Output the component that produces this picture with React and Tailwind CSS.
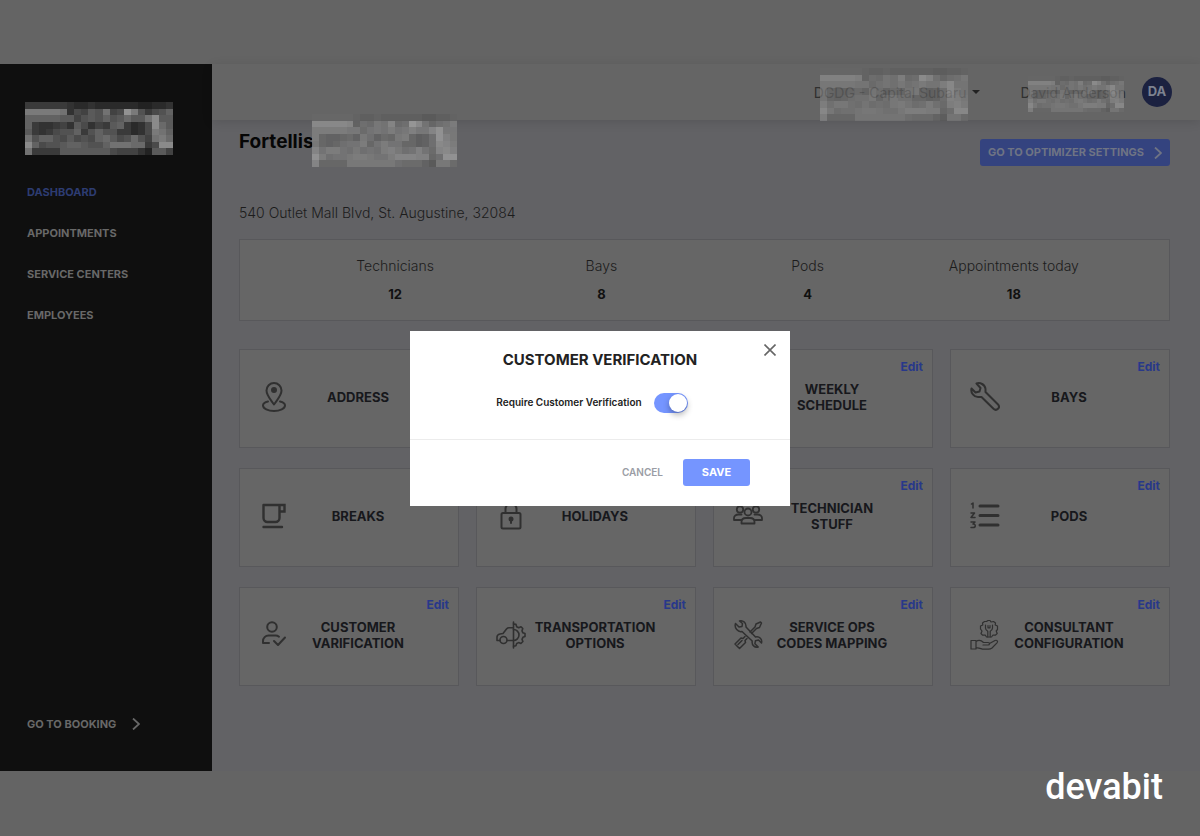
import { useState } from 'react';

const NAV_ITEMS = ['Dashboard', 'Appointments', 'Service Centers', 'Employees'];

const STATS = [
  { label: 'Technicians', value: 12 },
  { label: 'Bays', value: 8 },
  { label: 'Pods', value: 4 },
  { label: 'Appointments today', value: 18 },
];

// One hex digit per block: 0 is the darkest, f the lightest
const MOSAIC_ROWS = [
  '444444322322222211223',
  'cccccb36587b56fc74679',
  '99999885787978a88be88',
  '943345386354894236ea8',
  '843467794797744236cb9',
  'b7997686769a867a75bca',
  'e96778998779bbbaa46ee',
  'b44448888888655531885',
];

function Mosaic({ className, dark }) {
  return (
    <svg viewBox="0 0 21 8" preserveAspectRatio="none" shapeRendering="crispEdges" aria-hidden="true" className={className}>
      {MOSAIC_ROWS.map((row, y) =>
        row.split('').map((digit, x) => {
          const level = parseInt(digit, 16);
          const grey = dark ? 26 + level * 8 : 84 + level * 5;
          return <rect key={`${x}-${y}`} x={x} y={y} width="1" height="1" fill={`rgb(${grey},${grey},${grey})`} />;
        })
      )}
    </svg>
  );
}

function Icon({ children, strokeWidth = 2 }) {
  return (
    <svg
      viewBox="0 0 30 30"
      className="h-[30px] w-[30px] shrink-0 text-[#303030]"
      fill="none"
      stroke="currentColor"
      strokeWidth={strokeWidth}
      strokeLinecap="round"
      strokeLinejoin="round"
      aria-hidden="true"
    >
      {children}
    </svg>
  );
}

const AddressIcon = () => (
  <Icon>
    <path d="M15 22.500C12 18 7.500 13.500 7.500 8.500a7.500 7.500 0 0 1 15 0C22.500 13.500 18 18 15 22.500Z" />
    <circle cx="15" cy="8" r="2" fill="currentColor" />
    <path d="M9 19.500c-3 .7-5 2-5 4 0 3 5 5.500 11 5.500s11-2.500 11-5.500c0-2-2-3.300-5-4" />
  </Icon>
);

const CoffeeIcon = () => (
  <Icon strokeWidth={2.4}>
    <path d="M4.500 4h21v6.500h-5M20.500 4v13a4 4 0 0 1-4 4h-8a4 4 0 0 1-4-4V4" strokeLinejoin="miter" />
    <path d="M4.500 26h18.500" />
  </Icon>
);

const UserCheckIcon = () => (
  <Icon>
    <circle cx="13" cy="7" r="4.800" />
    <path d="M10 23H4v-2c0-3 2.500-5.500 5.500-5.500h7c1.500 0 2.500.4 3.500 1.200M15 21l4 4 7-7.500" />
  </Icon>
);

const LockIcon = () => (
  <Icon>
    <rect x="5.500" y="12" width="19" height="15.500" rx="1.500" />
    <path d="M9.500 12V8a5.500 5.500 0 0 1 11 0v4" />
    <circle cx="15" cy="18" r="1.500" fill="currentColor" />
    <path d="M15 18v4" />
  </Icon>
);

const CarGearIcon = () => (
  <Icon strokeWidth={1.6}>
    <path d="M17.500 2v26M4 20.500H1V17c0-1.500 1-2.500 3-3l3-.5 3.500-4.500c.7-.8 1.500-1.200 2.500-1.200h4.500M11.500 20.500h6" />
    <circle cx="7.500" cy="20" r="3.500" />
    <path d="M17.500 9.500a5.500 5.500 0 0 1 0 11M17.500 4l2.500.4.7 2.300 2 1 2.300-1 1.800 1.800-.8 2.300.9 2 2.100.7v3l-2.100.8-.9 2 .9 2.200-2 2-2.300-.9-1.900.9-.8 2.300-2.400.4" />
  </Icon>
);

const TeamIcon = () => (
  <Icon strokeWidth={1.8}>
    <circle cx="7" cy="8.500" r="3.200" />
    <circle cx="23" cy="8.500" r="3.200" />
    <circle cx="15" cy="11" r="3.500" />
    <path d="M7.500 19H1v-2c0-2 2-3.500 4.500-3.500h3M22.500 19H29v-2c0-2-2-3.500-4.500-3.500h-3M8.500 22.500V21c0-2.500 2-4 4.500-4h4c2.500 0 4.500 1.500 4.500 4v1.500Z" />
  </Icon>
);

const ToolsIcon = () => (
  <Icon strokeWidth={1.5}>
    <path d="m12 16.500-2 2-2-.5-6 6 4.500 4.500 6-6-.5-2 2-2M5 24.500l4-4M17 12l5-5 1-3 4.500-2 1 1-2 4.500-3 1-5 5" />
    <path d="M2.500 3.500 6 7l3-.5.5-3L6.500 1c3-1 7 1.500 6.500 6l9.500 10c4-1 7 2.500 6 6l-3-3-3 .7-.6 3 3.300 3.300c-3.500 1-6.700-2-6-6L9 11.500c-4 1-8-3.500-6.500-8Z" />
  </Icon>
);

const WrenchIcon = () => (
  <Icon>
    <path d="M6.500 1.500c3.500-1.300 8.500.8 9 5.500v3l12.300 12.300c1.300 1.300 1.500 3.200.2 4.500s-3.200 1.200-4.500 0L11.500 15H8c-4 0-7.500-4-6.500-8.500l4 4L9.500 9.500l1-3.500Z" />
  </Icon>
);

const NumberedListIcon = () => (
  <Icon strokeWidth={1.5}>
    <path d="M1.500 3 3 2v5M1 12h3.500L1 16.500h4M1 21h4l-2 2c3-.2 3 3.500 0 3.500H1" />
    <path d="M10 5h18M10 14.500h18M10 24h18" strokeWidth="3" />
  </Icon>
);

const HandGearIcon = () => (
  <Icon strokeWidth={1.2}>
    <path d="m16.500 1.500 1.500-1h2l1 1.500 2.500-.5 2 1.500-.3 2 2.300 1v3.500l-1.300 1.500 1 2.500-1.700 1.700-2.500-.2-1.500 2h-5l-1.300-2-2.700.2-1.500-1.700 1-2.500-1.500-2V6l2.300-1-.3-2 2-1.500Z" />
    <path d="M15.500 5v3c0 1.500 1 2.500 2.300 3.200V17M22.500 5v3c0 1.500-1 2.500-2.300 3.200V17M18 5.500v2.300h2V5.500" />
    <path d="M1 20.500h5v8.500H1ZM6 21.500c3-2 5.500-1 7.500 1h4.500c2 0 2 2.500 0 2.500h-5M19.500 23.500l5.500-3c2-.8 3.300.8 2 2.300L22 28c-1 .8-2 1.200-3.500 1.200H14c-3 0-4-1.700-8-1.200" />
  </Icon>
);

const CARDS = [
  { id: 'address', title: 'Address', icon: AddressIcon },
  { id: 'reserved' },
  { id: 'schedule', title: 'Weekly Schedule', editable: true },
  { id: 'bays', title: 'Bays', icon: WrenchIcon, editable: true },
  { id: 'breaks', title: 'Breaks', icon: CoffeeIcon },
  { id: 'holidays', title: 'Holidays', icon: LockIcon },
  { id: 'technicians', title: 'Technician Stuff', icon: TeamIcon, editable: true },
  { id: 'pods', title: 'Pods', icon: NumberedListIcon, editable: true },
  { id: 'verification', title: 'Customer Varification', icon: UserCheckIcon, editable: true },
  { id: 'transportation', title: 'Transportation Options', icon: CarGearIcon, editable: true },
  { id: 'mapping', title: 'Service Ops Codes Mapping', icon: ToolsIcon, editable: true },
  { id: 'consultant', title: 'Consultant Configuration', icon: HandGearIcon, editable: true },
];

function ChevronRight() {
  return (
    <svg viewBox="0 0 8 12" className="h-3 w-2" fill="none" stroke="currentColor" strokeWidth="1.8" aria-hidden="true">
      <path d="m1 .5 6 5.500-6 5.500" />
    </svg>
  );
}

function Sidebar() {
  return (
    <aside className="flex w-[212px] shrink-0 flex-col bg-[#0f0f0f] pt-[38px] pb-[39px]">
      <Mosaic dark className="ml-[25px] h-[53px] w-[148px]" />
      <nav className="mt-[29px] flex flex-col gap-[25px] pl-[27px]">
        {NAV_ITEMS.map((item, index) => (
          <a key={item} href="#" className={`text-[11px] leading-4 font-bold uppercase ${index === 0 ? 'text-[#2d3c72]' : 'text-[#686868]'}`}>
            {item}
          </a>
        ))}
      </nav>
      <a href="#" className="mt-auto flex items-center gap-4 pl-[27px] text-[11px] leading-4 font-bold text-[#686868] uppercase">
        Go to booking
        <ChevronRight />
      </a>
    </aside>
  );
}

function Header() {
  return (
    <header className="flex h-14 items-center justify-end bg-[#656565] pr-7 text-[14px] text-[#303030] shadow-[0_2px_10px_rgba(0,0,0,0.12)]">
      <button type="button" className="relative mr-10 flex items-center gap-1.5">
        DGDG - Capital Subaru
        <svg viewBox="0 0 8 4" className="h-1 w-2 text-[#222]" fill="currentColor" aria-hidden="true">
          <path d="M0 0h8L4 4Z" />
        </svg>
        <Mosaic className="absolute top-[-14px] right-3 h-[53px] w-[148px] opacity-65" />
      </button>
      <div className="relative mr-4">
        David Anderson
        <Mosaic className="absolute top-[-6px] right-0.5 h-9 w-24 opacity-65" />
      </div>
      <div className="flex h-[30px] w-[30px] items-center justify-center rounded-full bg-[#1b2140] text-[13px] font-bold text-[#7d8290]">DA</div>
    </header>
  );
}

function SettingsCard({ title, icon: CardIcon, editable }) {
  return (
    <article className="relative flex h-[99px] items-center border border-[#58585b] bg-[#666] pr-[31px] pb-[3px] pl-[19px]">
      {CardIcon ? <CardIcon /> : <span className="w-[30px] shrink-0" />}
      <h2 className="flex-1 px-2 text-center text-[13px] leading-4 font-bold text-[#17181c] uppercase">{title}</h2>
      {editable && (
        <button type="button" className="absolute top-[9px] right-[9px] text-[12px] leading-4 font-bold text-[#28388a]">
          Edit
        </button>
      )}
    </article>
  );
}

function VerificationModal({ onClose }) {
  const [required, setRequired] = useState(true);

  return (
    <div className="fixed inset-0 z-40 flex items-center justify-center">
      <div role="dialog" aria-modal="true" aria-labelledby="modal-title" className="relative w-[380px] bg-white">
        <button type="button" aria-label="Close" onClick={onClose} className="absolute top-[13px] right-3.5 text-[#666]">
          <svg viewBox="0 0 12 12" className="h-3 w-3" fill="none" stroke="currentColor" strokeWidth="1.6" aria-hidden="true">
            <path d="m.5.5 11 11M11.500.5.5 11.500" />
          </svg>
        </button>
        <div className="border-b border-[#ececec] pt-[19px] pb-[26px]">
          <h2 id="modal-title" className="text-center text-[15px] leading-5 font-bold text-[#222] uppercase">
            Customer Verification
          </h2>
          <label className="mt-[23px] flex items-center justify-center gap-3 pr-4 text-[10px] font-semibold text-[#222]">
            Require Customer Verification
            <span className="relative h-5 w-[34px]">
              <input
                type="checkbox"
                role="switch"
                checked={required}
                onChange={(e) => setRequired(e.target.checked)}
                className="peer block h-5 w-[34px] appearance-none rounded-full bg-gray-300 checked:bg-[#7595ff]"
              />
              <span className="pointer-events-none absolute top-px left-px h-[18px] w-[18px] rounded-full bg-white shadow-[0_3px_6px_rgba(0,0,0,0.3)] peer-checked:left-[15px]" />
            </span>
          </label>
        </div>
        <div className="flex items-center justify-end gap-5 pt-[19px] pr-10 pb-5">
          <button type="button" onClick={onClose} className="text-[10px] font-semibold text-[#9a9da5] uppercase">
            Cancel
          </button>
          <button type="button" className="h-[27px] w-[67px] rounded-[3px] bg-[#7595ff] text-[11px] font-bold text-white uppercase">
            Save
          </button>
        </div>
      </div>
    </div>
  );
}

export default function App() {
  const [isOpen, setIsOpen] = useState(true);

  return (
    <div className="flex min-h-screen flex-col bg-[#646464] pt-16 font-['Inter','Liberation_Sans',sans-serif]">
      <div className="flex flex-1">
        <Sidebar />
        <div className="flex min-w-0 flex-1 flex-col bg-[#626265]">
          <Header />
          <main className="pt-[9px] pr-[30px] pb-8 pl-[27px]">
            <div className="flex items-start justify-between">
              <h1 className="relative text-[19px] leading-[26px] font-bold text-[#060606]">
                Fortellis
                <Mosaic className="absolute top-[-15px] left-[73px] h-[53px] w-[145px] opacity-85" />
              </h1>
              <button type="button" className="mt-2.5 flex h-[27px] items-center gap-2.5 rounded-[3px] bg-[#34437f] px-2 text-[11px] font-bold text-[#6f7484] uppercase">
                Go to optimizer settings
                <ChevronRight />
              </button>
            </div>
            <p className="mt-[37px] text-[14px] leading-5 font-light text-[#1c1c1c]">540 Outlet Mall Blvd, St. Augustine, 32084</p>
            <dl className="mt-4 grid grid-cols-4 border border-[#58585b] bg-[#666] px-[52px] py-4 text-center">
              {STATS.map(({ label, value }) => (
                <div key={label}>
                  <dt className="text-[14px] leading-5 font-light text-[#1c1c1c]">{label}</dt>
                  <dd className="mt-2 text-[13px] leading-5 font-bold text-[#111]">{value}</dd>
                </div>
              ))}
            </dl>
            <section className="mt-7 grid grid-cols-4 gap-x-[17px] gap-y-5">
              {CARDS.map(({ id, ...card }) => (
                <SettingsCard key={id} {...card} />
              ))}
            </section>
          </main>
        </div>
      </div>
      <footer className="flex h-[65px] justify-end pr-[37px] font-['Roboto',sans-serif] text-[36px] leading-8 font-medium text-white">
        devabit
      </footer>
      {isOpen && <VerificationModal onClose={() => setIsOpen(false)} />}
    </div>
  );
}
